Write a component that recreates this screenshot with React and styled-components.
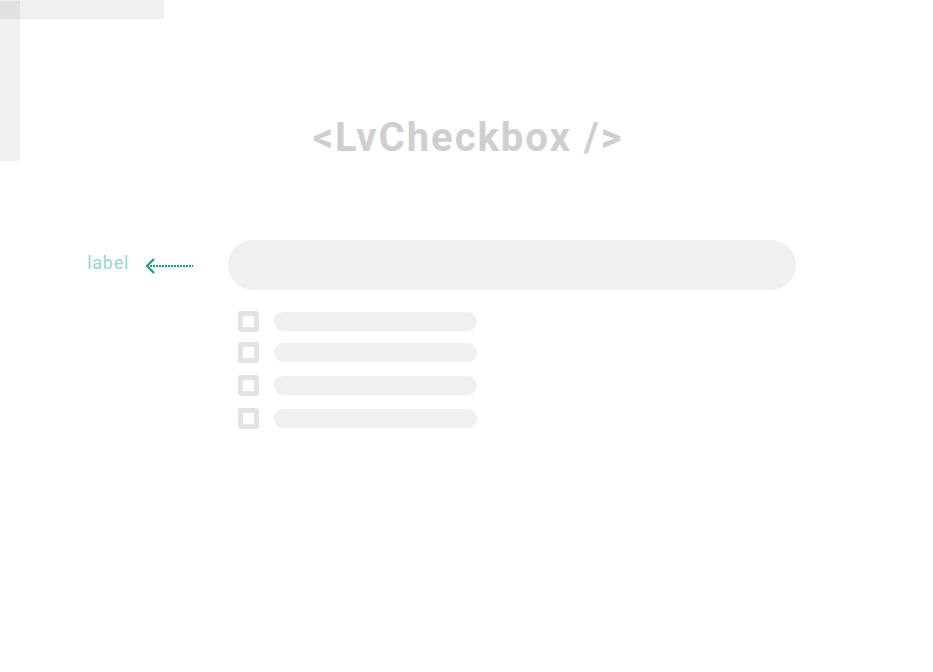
import React from "react";
import styled, { createGlobalStyle } from "styled-components";

const Global = createGlobalStyle`
  html, body { margin: 0; padding: 0; background: #ffffff; }
  body { font-family: Roboto, "Liberation Sans", sans-serif; }
`;

const Page = styled.div`
  width: 933px;
  height: 672px;
  display: grid;
  grid-template: 1fr / 1fr;
  overflow: hidden;
`;

const Corner = styled.div`
  grid-area: 1 / 1;
  align-self: start;
  justify-self: start;
  display: grid;
  grid-template: auto / auto;
`;

const CornerBar = styled.div`
  grid-area: 1 / 1;
  width: ${(p) => p.$w}px;
  height: ${(p) => p.$h}px;
  margin-top: ${(p) => p.$top || 0}px;
  background: rgba(0, 0, 0, 0.058);
`;

const Content = styled.div`
  grid-area: 1 / 1;
  display: flex;
  flex-direction: column;
  align-items: stretch;
`;

const Title = styled.h1`
  margin: 110px 0 0;
  text-align: center;
  font-family: Roboto, "Liberation Sans", sans-serif;
  font-weight: 700;
  font-size: 40px;
  line-height: 56px;
  letter-spacing: 2px;
  color: #cfcfcf;
  padding-left: 3px;
`;

const Row = styled.div`
  margin-top: 74px;
  display: flex;
  align-items: center;
`;

const LabelSide = styled.div`
  width: 228px;
  display: flex;
  align-items: center;
  justify-content: flex-end;
  padding-right: 35px;
  box-sizing: border-box;
  gap: 16px;
`;

const LabelText = styled.span`
  font-family: Roboto, "Liberation Sans", sans-serif;
  font-size: 18px;
  letter-spacing: 0.7px;
  color: #93d8d2;
  margin-top: -6px;
`;

const Pill = styled.div`
  width: 568px;
  height: 50px;
  border-radius: 25px;
  background: #f0f0f0;
`;

const List = styled.div`
  margin: 21px 0 0 238px;
  display: flex;
  flex-direction: column;
  gap: 12px;
`;

const Item = styled.div`
  display: flex;
  align-items: center;
  gap: 15px;
  margin-top: ${(p) => p.$shift || 0}px;
`;

const Box = styled.div`
  width: 21px;
  height: 21px;
  box-sizing: border-box;
  border: 5px solid #e3e3e3;
  border-radius: 3px;
  background: #ffffff;
`;

const Line = styled.div`
  width: 203px;
  height: 19px;
  border-radius: 10px;
  background: #f0f0f0;
`;

const ArrowSvg = styled.svg`
  display: block;
  margin-top: 2px;
`;

const Arrow = () => (
  <ArrowSvg width="48" height="16" viewBox="0 0 48 16">
    <path d="M9 1 L2 8 L9 15" fill="none" stroke="#159a8b" strokeWidth="2.2" />
    <line x1="5" y1="8" x2="48" y2="8" stroke="#159a8b" strokeWidth="2" strokeDasharray="2 1" />
  </ArrowSvg>
);

export default function App() {
  return (
    <>
      <Global />
      <Page>
        <Corner>
          <CornerBar $w={164} $h={19} />
          <CornerBar $w={20} $h={160} $top={1} />
        </Corner>
        <Content>
          <Title>&lt;LvCheckbox /&gt;</Title>
          <Row>
            <LabelSide>
              <LabelText>label</LabelText>
              <Arrow />
            </LabelSide>
            <Pill />
          </Row>
          <List>
            <Item><Box /><Line /></Item>
            <Item $shift={-2}><Box /><Line /></Item>
            <Item><Box /><Line /></Item>
            <Item><Box /><Line /></Item>
          </List>
        </Content>
      </Page>
    </>
  );
}
